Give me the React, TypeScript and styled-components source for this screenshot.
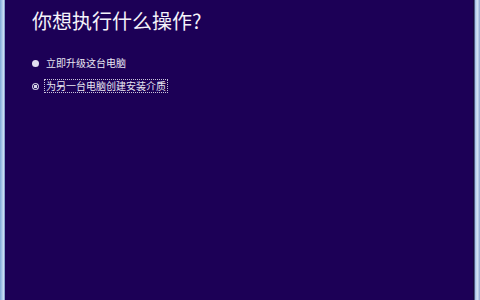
import React from "react";
import styled, { createGlobalStyle } from "styled-components";

const Global = createGlobalStyle`
  html, body { margin: 0; padding: 0; }
  body { width: 480px; height: 300px; overflow: hidden; background: #1c0056; }
  #root { width: 480px; height: 300px; }
`;

const Frame = styled.div`
  width: 480px;
  height: 300px;
  display: flex;
  box-sizing: border-box;
`;

const EdgeLeft = styled.div`
  width: 5px;
  flex: none;
  background: linear-gradient(to right, #7fa6d6 0, #a9c6ea 40%, #c9def4 70%, #6a86c0 100%);
`;

const EdgeRight = styled.div`
  width: 7px;
  flex: none;
  background: linear-gradient(to right, #14083c 0, #14083c 15%, #9cbbe4 30%, #d8e6f6 60%, #b5c9e6 80%, #8aa4d0 100%);
`;

const Panel = styled.div`
  flex: 1;
  background: #1c0056;
  padding: 7px 0 0 27px;
  font-family: "Noto Sans CJK SC", "Noto Sans", sans-serif;
  color: #ffffff;
`;

const Title = styled.h1`
  margin: 0;
  font-size: 20px;
  font-weight: 400;
  line-height: 27px;
  color: #f4f2fa;
`;

const Options = styled.div`
  margin-top: 22px;
  display: flex;
  flex-direction: column;
  gap: 9px;
`;

const Option = styled.div`
  display: flex;
  align-items: center;
  height: 14px;
  font-size: 10px;
  color: #e8e6f2;
`;

const Dot = styled.span<{ $selected?: boolean }>`
  width: 7px;
  height: 7px;
  border-radius: 50%;
  box-sizing: border-box;
  flex: none;
  margin-right: 5px;
  background: ${(p) => (p.$selected ? "radial-gradient(circle, #d8d4e8 0 1.6px, #2a1666 1.8px 2.2px, #c8c4dc 2.4px)" : "#e2def0")};
`;

const Label = styled.span<{ $focused?: boolean }>`
  padding: 0 1px;
  line-height: 12px;
  border: 1px ${(p) => (p.$focused ? "dotted #c8c4dc" : "solid transparent")};
`;

export default function App() {
  return (
    <>
      <Global />
      <Frame>
        <EdgeLeft />
        <Panel>
          <Title>你想执行什么操作?</Title>
          <Options>
            <Option>
              <Dot />
              <Label>立即升级这台电脑</Label>
            </Option>
            <Option>
              <Dot $selected />
              <Label $focused>为另一台电脑创建安装介质</Label>
            </Option>
          </Options>
        </Panel>
        <EdgeRight />
      </Frame>
    </>
  );
}
